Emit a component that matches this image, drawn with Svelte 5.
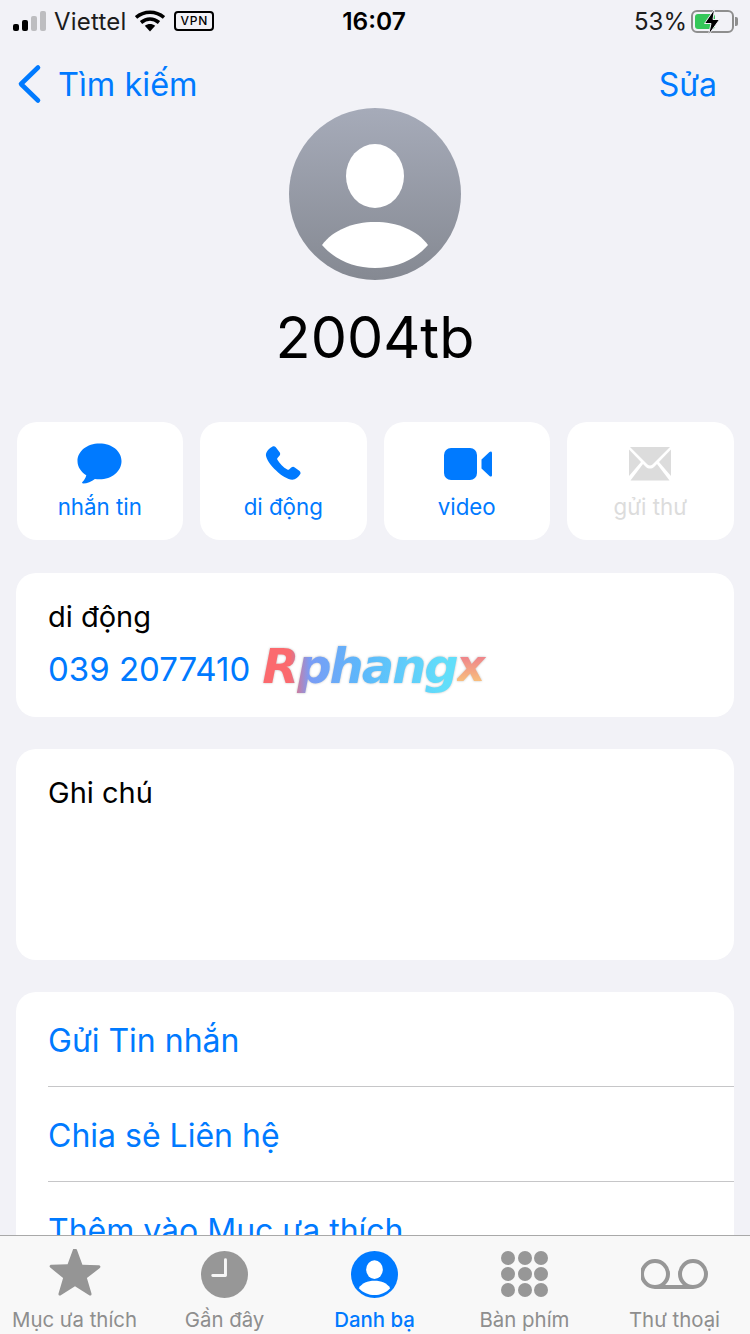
<script lang="ts">
	const actions = [
		{ label: 'nhắn tin', icon: 'message' },
		{ label: 'di động', icon: 'phone' },
		{ label: 'video', icon: 'video' },
		{ label: 'gửi thư', icon: 'mail', disabled: true }
	];
	const rows = ['Gửi Tin nhắn', 'Chia sẻ Liên hệ', 'Thêm vào Mục ưa thích'];
	const tabs = [
		{ label: 'Mục ưa thích', icon: 'star' },
		{ label: 'Gần đây', icon: 'clock' },
		{ label: 'Danh bạ', icon: 'person', active: true },
		{ label: 'Bàn phím', icon: 'keypad' },
		{ label: 'Thư thoại', icon: 'voicemail' }
	];
	const dots = [0, 1, 2];
</script>

<div class="screen">
	<header class="status">
		<div class="status-left">
			<span class="signal">
				<i class="on" style="height:7px"></i>
				<i class="on" style="height:11px"></i>
				<i style="height:15px"></i>
				<i style="height:20px"></i>
			</span>
			<span class="carrier">Viettel</span>
			<svg width="30" height="22" viewBox="0 0 30 22" class="wifi">
				<path d="M1 7.500C9 .5 21 .5 29 7.500" fill="none" stroke="#000" stroke-width="3.600" />
				<path d="M6 12.500c5.500-4.500 12.500-4.500 18 0" fill="none" stroke="#000" stroke-width="3.600" />
				<path d="M9.800 15.800c3.200-2.500 7.200-2.500 10.400 0L15 21.500z" fill="#000" />
			</svg>
			<span class="vpn">VPN</span>
		</div>
		<span class="clock">16:07</span>
		<div class="status-right">
			<span class="percent">53%</span>
			<span class="battery">
				<span class="fill"></span>
				<svg width="18" height="26" viewBox="0 0 18 26" class="bolt">
					<path d="M11.500 0 1.500 14.500H8L5.500 26 16.500 10.500H10z" fill="#000" stroke="#f2f2f7" stroke-width="1" />
				</svg>
			</span>
			<span class="nub"></span>
		</div>
	</header>

	<nav class="nav">
		<a class="back">
			<svg width="26" height="40" viewBox="0 0 26 40">
				<path d="M22 3.500 5 20l17 16.500" fill="none" stroke="#007aff" stroke-width="4.600" stroke-linecap="round" stroke-linejoin="round" />
			</svg>
			Tìm kiếm
		</a>
		<a class="edit">Sửa</a>
	</nav>

	<section class="profile">
		<svg width="172" height="172" viewBox="0 0 172 172">
			<defs>
				<linearGradient id="avatar" x1="0" y1="0" x2="0" y2="1">
					<stop offset="0" stop-color="#a6abb9" />
					<stop offset="1" stop-color="#858992" />
				</linearGradient>
			</defs>
			<circle cx="86" cy="86" r="86" fill="url(#avatar)" />
			<ellipse cx="86" cy="68" rx="29" ry="32" fill="#fff" />
			<path d="M33 137C44 122 64 114 86 114s42 8 53 23c-13 15-32 23-53 23s-40-8-53-23z" fill="#fff" />
		</svg>
		<h1>2004tb</h1>
	</section>

	<div class="actions">
		{#each actions as action}
			<button class="action" class:disabled={action.disabled}>
				<span class="action-icon">
					{#if action.icon === 'message'}
						<svg width="45" height="42" viewBox="0 0 46 42">
							<path d="M23 0C10.300 0 .5 7.900.5 18c0 6 3.500 11.300 9 14.500-.6 2.700-2.300 5.300-4 7-.7.8-.2 1.500.8 1.500 4 0 8.700-2.200 12-4.700 1.500.2 3 .4 4.700.4 12.700 0 22.500-8.100 22.500-18.700C45.500 7.900 35.700 0 23 0z" fill="#007aff" />
						</svg>
					{:else if action.icon === 'phone'}
						<svg width="36" height="36" viewBox="0 0 38 38">
							<path d="M8 .5c1.200-.7 2.500-.3 3.400.8l4 5.300c.9 1.200.8 2.600-.2 3.700l-2 2.300c-.5.6-.5 1.200-.1 1.900 2.300 4 6.300 8 10.400 10.400.7.400 1.300.4 1.900-.1l2.300-2c1.100-1 2.500-1.100 3.700-.2l4.800 3.600c1.300 1 1.700 2.400.9 3.700-1.800 3-4.800 5.600-8.300 5.600C19.500 35.500 2 18.500 1 10 .6 6 4.500 2.500 8 .5z" fill="#007aff" />
						</svg>
					{:else if action.icon === 'video'}
						<svg width="50" height="34" viewBox="-1 0 50 34">
							<rect x="1" y="1" width="33" height="32" rx="7" fill="#007aff" />
							<path d="M38.500 12.500 46.500 5c1.200-1 2.500-.6 2.500 1v22c0 1.600-1.300 2-2.500 1l-8-7.500z" fill="#007aff" />
						</svg>
					{:else}
						<svg width="44" height="36" viewBox="0 0 44 36">
							<path d="M2 1h40L24.500 18.500c-1.500 1.400-3.500 1.400-5 0z" fill="#dcdcdc" />
							<path d="M1 3.500 13 16 1 30zM43 3.500 31 16l12 14zM2.500 34.500 15 18l3 3c2.200 2 5.800 2 8 0l3-3 12.500 16.500z" fill="#dcdcdc" />
						</svg>
					{/if}
				</span>
				<span class="action-label">{action.label}</span>
			</button>
		{/each}
	</div>

	<section class="card phone">
		<div class="caption">di động</div>
		<div class="number">
			<span>039 2077410</span>
			<span class="mark"><span class="mark-word">Rphang</span><span class="mark-x">x</span></span>
		</div>
	</section>

	<section class="card note">
		<div class="caption">Ghi chú</div>
	</section>

	<section class="card list">
		{#each rows as row}
			<div class="row"><span>{row}</span></div>
		{/each}
	</section>

	<footer class="tabbar">
		{#each tabs as tab}
			<div class="tab" class:active={tab.active}>
				<span class="tab-icon">
					{#if tab.icon === 'star'}
						<svg width="52" height="50" viewBox="0 2 52 50">
							<path d="M26 1.500c1 0 1.700.6 2.100 1.800l5.300 14.500 15.900.5c2.200 0 2.900 1.700 1.200 3L37.900 31l4.500 15.300c.6 2-.9 3-2.600 1.800L26 39.300l-13.800 8.800c-1.700 1.200-3.200.2-2.600-1.800L14.100 31 1.500 20.800c-1.700-1.300-1-3 1.200-3l15.900-.5 5.300-14.500c.4-1.200 1.100-1.800 2.100-1.800z" fill="#959595" />
						</svg>
					{:else if tab.icon === 'clock'}
						<svg width="47" height="47" viewBox="0 0 48 48">
							<circle cx="24" cy="24" r="24" fill="#979797" />
							<path d="M25 9v16H12" fill="none" stroke="#f7f7f7" stroke-width="3" stroke-linecap="round" stroke-linejoin="round" />
						</svg>
					{:else if tab.icon === 'person'}
						<svg width="47" height="47" viewBox="0 0 48 48">
							<circle cx="24" cy="24" r="24" fill="#007aff" />
							<ellipse cx="24" cy="19" rx="8.500" ry="9.500" fill="#fff" />
							<path d="M8 38c3-5 9-7.500 16-7.500S37 33 40 38c-4 4.500-10 7-16 7s-12-2.500-16-7z" fill="#fff" />
						</svg>
					{:else if tab.icon === 'keypad'}
						<span class="keypad">
							{#each dots as _}
								{#each dots as _}
									<i></i>
								{/each}
							{/each}
						</span>
					{:else}
						<svg width="68" height="30" viewBox="1 0 68 30">
							<circle cx="15" cy="15" r="13" fill="none" stroke="#979797" stroke-width="4" />
							<circle cx="53" cy="15" r="13" fill="none" stroke="#979797" stroke-width="4" />
							<path d="M15 28h38" stroke="#979797" stroke-width="4" />
						</svg>
					{/if}
				</span>
				<span class="tab-label">{tab.label}</span>
			</div>
		{/each}
	</footer>
</div>

<style>
	:global(body) {
		background: #f2f2f7;
	}

	.screen {
		position: relative;
		width: 750px;
		height: 1334px;
		overflow: hidden;
		background: #f2f2f7;
		color: #000;
		font-family: Inter, 'Noto Sans', sans-serif;
	}

	.status {
		display: flex;
		justify-content: space-between;
		align-items: center;
		box-sizing: border-box;
		height: 40px;
		padding: 2px 12px 0 13px;
		font-size: 24px;
	}

	.status-left,
	.status-right {
		display: flex;
		align-items: center;
		width: 240px;
	}

	.status-right {
		justify-content: flex-end;
	}

	.signal {
		display: flex;
		align-items: flex-end;
		gap: 3px;
		height: 20px;
		margin-right: 8px;
	}

	.signal i {
		width: 6px;
		border-radius: 2px;
		background: #bdbdc0;
	}

	.signal i.on {
		background: #000;
	}

	.carrier {
		color: #1c1c1c;
		letter-spacing: 0.2px;
	}

	.wifi {
		margin-left: 9px;
	}

	.vpn {
		margin-left: 9px;
		padding: 0 4px;
		height: 16px;
		line-height: 16px;
		border: 2px solid #000;
		border-radius: 4px;
		font-size: 12px;
		font-weight: 500;
		letter-spacing: 0.8px;
	}

	.clock {
		font-weight: 600;
		font-size: 24.500px;
		margin-left: -3px;
	}

	.percent {
		margin-right: 4px;
		color: #1c1c1c;
	}

	.battery {
		position: relative;
		box-sizing: border-box;
		width: 43px;
		height: 23px;
		border: 2px solid #8e8e8e;
		border-radius: 6px;
	}

	.fill {
		display: block;
		position: absolute;
		left: 2px;
		top: 2px;
		bottom: 2px;
		width: 20px;
		border-radius: 3px;
		background: #34c759;
	}

	.bolt {
		position: absolute;
		left: 10px;
		top: -3px;
	}

	.nub {
		width: 3px;
		height: 9px;
		margin-left: 1px;
		border-radius: 0 2px 2px 0;
		background: #8e8e8e;
	}

	.nav {
		display: flex;
		justify-content: space-between;
		align-items: center;
		height: 88px;
		padding: 0 33px 0 16px;
		font-size: 32.500px;
		color: #007aff;
	}

	.back {
		display: flex;
		align-items: center;
		gap: 16px;
	}

	.edit {
		font-size: 32px;
	}

	.profile {
		display: flex;
		flex-direction: column;
		align-items: center;
		margin-top: -20px;
	}

	.profile svg {
		display: block;
	}

	h1 {
		margin: 21px 0 0;
		font-size: 57.500px;
		font-weight: 400;
		line-height: 72px;
	}

	.actions {
		display: grid;
		grid-template-columns: repeat(4, 1fr);
		gap: 17px;
		margin: 49px 16.500px 0;
	}

	.action {
		display: flex;
		flex-direction: column;
		align-items: center;
		height: 118px;
		padding: 0;
		border: 0;
		border-radius: 20px;
		background: #fff;
		color: #007aff;
		font-family: inherit;
	}

	.action-icon {
		display: flex;
		align-items: center;
		justify-content: center;
		height: 42px;
		margin-top: 21px;
	}

	.action-label {
		margin-top: 6px;
		font-size: 22.300px;
		line-height: 32px;
	}

	.disabled {
		color: #dcdcdc;
	}

	.card {
		margin: 33px 16px 0;
		border-radius: 20px;
		background: #fff;
	}

	.phone {
		height: 144px;
		padding: 26px 0 0 32px;
		box-sizing: border-box;
	}

	.caption {
		font-size: 29px;
		line-height: 36px;
	}

	.number {
		display: flex;
		align-items: center;
		gap: 12px;
		margin-top: 6px;
		font-size: 33px;
		line-height: 42px;
		color: #007aff;
	}

	.mark {
		display: flex;
		font-family: 'DejaVu Sans', sans-serif;
		font-size: 48px;
		font-weight: 700;
		font-style: italic;
		line-height: 56px;
		transform: translateY(-3px);
		filter: drop-shadow(0 0 1px rgba(0, 0, 0, 0.25));
	}

	.mark-word {
		letter-spacing: -2px;
		padding-right: 3px;
		background: linear-gradient(90deg, #fb6a6e 0 14%, #7a9cf5 24%, #5cb8fb 50%, #62defa 92%);
		-webkit-background-clip: text;
		background-clip: text;
		color: transparent;
	}

	.mark-x {
		margin-left: -3px;
		font-size: 44px;
		padding-right: 4px;
		background: linear-gradient(180deg, #ee7f8c 30%, #f8c27c 80%);
		-webkit-background-clip: text;
		background-clip: text;
		color: transparent;
	}

	.note {
		height: 211px;
		margin-top: 32px;
		padding: 26px 0 0 32px;
		box-sizing: border-box;
	}

	.list {
		margin-top: 32px;
		padding-left: 32px;
		border-radius: 20px 20px 0 0;
		height: 400px;
	}

	.row {
		display: flex;
		align-items: center;
		box-sizing: border-box;
		height: 95px;
		padding-top: 2px;
		border-bottom: 1px solid #c6c6c8;
		font-size: 32px;
		color: #007aff;
	}

	.row:last-child {
		border-bottom: 0;
	}

	.tabbar {
		position: absolute;
		left: 0;
		right: 0;
		bottom: 0;
		display: grid;
		grid-template-columns: repeat(5, 150px);
		height: 98px;
		border-top: 1px solid #a9a9a9;
		background: #f8f8f8;
	}

	.tab {
		display: flex;
		flex-direction: column;
		align-items: center;
		margin-right: 1px;
		color: #8e8e8e;
	}

	.tab.active {
		color: #007aff;
		font-weight: 500;
	}

	.tab-icon {
		display: flex;
		align-items: center;
		justify-content: center;
		height: 50px;
		margin-top: 13px;
	}

	.tab-label {
		margin-top: 7px;
		font-size: 20.400px;
		line-height: 28px;
		white-space: nowrap;
	}

	.keypad {
		display: grid;
		grid-template-columns: repeat(3, 14px);
		grid-auto-rows: 14px;
		gap: 2px 2.500px;
	}

	.keypad i {
		border-radius: 50%;
		background: #979797;
	}
</style>
